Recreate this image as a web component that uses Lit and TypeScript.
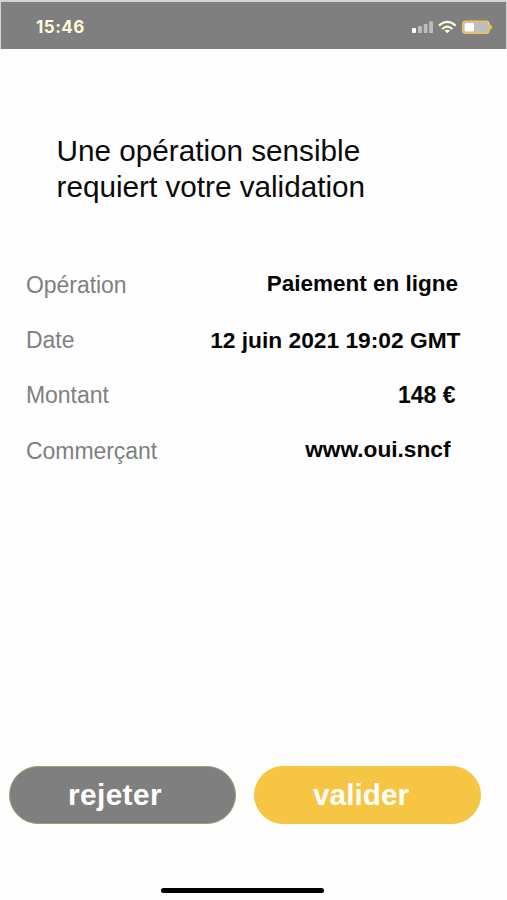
import { LitElement, html, css } from "lit";
import { customElement } from "lit/decorators.js";

@customElement("status-bar")
class StatusBar extends LitElement {
  static styles = css`
    :host {
      display: flex;
      align-items: center;
      justify-content: space-between;
      box-sizing: border-box;
      height: 49px;
      padding: 3px 12px 0 35px;
      background: #7f7f7f;
      border: solid #d4d4d4;
      border-width: 2px 1px 0;
    }
    .time {
      font: 700 17px/24px Inter, "Liberation Sans", sans-serif;
      letter-spacing: 0.5px;
      color: #fffcd8;
    }
    .icons {
      display: block;
    }
  `;

  render() {
    return html`
      <span class="time">15:46</span>
      <svg class="icons" width="84" height="20" viewBox="410 16 84 20">
        <rect x="412" y="27" width="4" height="5" rx="1" fill="#fff" />
        <g fill="#bdbdbd">
          <rect x="418" y="25" width="3.8" height="7" rx="0.8" />
          <rect x="423.7" y="23" width="3.8" height="9" rx="0.8" />
          <rect x="429.2" y="20.2" width="3.8" height="11.8" rx="0.8" />
        </g>
        <g fill="none" stroke="#fffcd8" stroke-width="2.2">
          <path d="M439 24.6 Q447.3 17.2 455.6 24.6" />
          <path d="M442.2 28 Q447.3 23.2 452.4 28" />
        </g>
        <path d="M444.6 29.7 Q447.3 27.6 450 29.7 L447.3 32.2 Z" fill="#fffcd8" />
        <rect x="462.6" y="20.3" width="26.6" height="12" rx="3" fill="#bebebe" stroke="#efc350" stroke-width="1.4" />
        <rect x="464.6" y="22" width="9.4" height="8.6" rx="1.5" fill="#fff" />
        <path d="M490 23.8 Q492.3 24.4 492.3 26.3 Q492.3 28.2 490 28.8 Z" fill="#efc350" />
      </svg>
    `;
  }
}

@customElement("detail-row")
class DetailRow extends LitElement {
  static properties = { label: {}, value: {} };
  declare label: string;
  declare value: string;

  static styles = css`
    :host {
      display: flex;
      align-items: center;
      justify-content: space-between;
      height: 55.4px;
      line-height: 27px;
      white-space: nowrap;
    }
    .label {
      font-size: 23px;
      letter-spacing: -0.05px;
      color: #808080;
    }
    .value {
      font-size: var(--value-size, 22.75px);
      font-weight: 700;
      color: #050505;
      padding-right: var(--value-inset, 0);
      padding-bottom: var(--value-lift, 0);
    }
  `;

  render() {
    return html`<span class="label">${this.label}</span><span class="value">${this.value}</span>`;
  }
}

@customElement("app-root")
class AppRoot extends LitElement {
  static styles = css`
    :host {
      display: flex;
      flex-direction: column;
      box-sizing: border-box;
      height: 900px;
      background: #fefefe;
      font-family: "Liberation Sans", Arial, sans-serif;
      overflow: hidden;
    }
    .title {
      margin: 84px 0 0 56.5px;
      font-size: 29.7px;
      line-height: 36px;
      font-weight: 400;
      color: #0a0a0a;
    }
    .details {
      margin-top: 52.5px;
      padding: 0 46.5px 0 26px;
    }
    .operation {
      --value-inset: 2.5px;
      --value-lift: 3px;
      --value-size: 22.5px;
    }
    .amount {
      --value-inset: 5px;
      --value-size: 23px;
    }
    .merchant {
      --value-inset: 10px;
      --value-lift: 3px;
      --value-size: 22.7px;
    }
    .actions {
      display: flex;
      gap: 18px;
      margin: auto 0 0 9px;
    }
    .action {
      box-sizing: border-box;
      width: 227px;
      height: 58px;
      padding: 0 0 1px 58px;
      border: 1px solid #f5c543;
      border-radius: 29px;
      background: #f5c543;
      color: #fffef8;
      font: 700 29.8px/34px "Liberation Sans", Arial, sans-serif;
      text-align: left;
    }
    .reject {
      background: #7f7f7f;
      border-color: #a09d70;
      color: #fff;
      letter-spacing: 0.4px;
    }
    .home {
      width: 163px;
      height: 5px;
      margin: 64px 0 7px 160.5px;
      border-radius: 3px;
      background: #000;
    }
  `;

  render() {
    return html`
      <status-bar></status-bar>
      <h1 class="title">Une opération sensible<br />requiert votre validation</h1>
      <section class="details">
        <detail-row class="operation" label="Opération" value="Paiement en ligne"></detail-row>
        <detail-row label="Date" value="12 juin 2021 19:02 GMT"></detail-row>
        <detail-row class="amount" label="Montant" value="148 €"></detail-row>
        <detail-row class="merchant" label="Commerçant" value="www.oui.sncf"></detail-row>
      </section>
      <div class="actions">
        <button class="action reject">rejeter</button>
        <button class="action">valider</button>
      </div>
      <div class="home"></div>
    `;
  }
}
